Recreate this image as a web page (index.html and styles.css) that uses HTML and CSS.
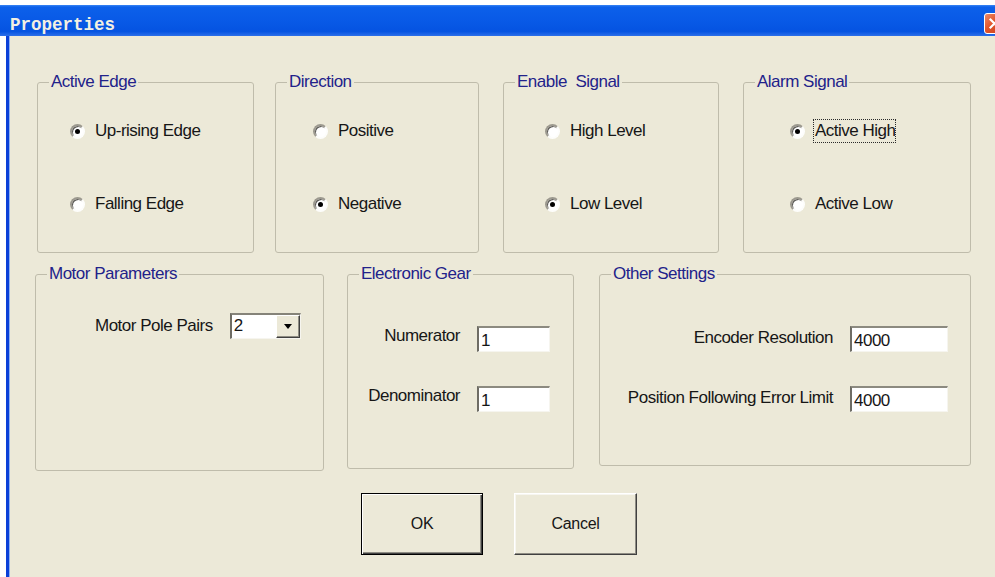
FILE: index.html
```html
<!DOCTYPE html>
<html lang="en">
<head>
<meta charset="utf-8">
<title>Properties</title>
<link rel="stylesheet" href="styles.css">
</head>
<body>
<div class="window">
  <div class="titlebar">
    <span class="title">Properties</span>
    <span class="close" aria-label="Close">
      <svg width="13" height="13" viewBox="0 0 13 13"><path d="M2.5 2.5 L10.5 10.5 M10.5 2.5 L2.5 10.5" stroke="#fff" stroke-width="2.2" stroke-linecap="square"/></svg>
    </span>
  </div>

  <div class="client">
    <div class="row row-top">
      <fieldset class="group g-edge">
        <legend>Active Edge</legend>
        <div class="options">
          <div class="option"><span class="radio checked"></span><span class="text">Up-rising Edge</span></div>
          <div class="option"><span class="radio"></span><span class="text">Falling Edge</span></div>
        </div>
      </fieldset>

      <fieldset class="group g-dir">
        <legend>Direction</legend>
        <div class="options">
          <div class="option"><span class="radio"></span><span class="text">Positive</span></div>
          <div class="option"><span class="radio checked"></span><span class="text">Negative</span></div>
        </div>
      </fieldset>

      <fieldset class="group g-enable">
        <legend>Enable&nbsp; Signal</legend>
        <div class="options">
          <div class="option"><span class="radio"></span><span class="text">High Level</span></div>
          <div class="option"><span class="radio checked"></span><span class="text">Low Level</span></div>
        </div>
      </fieldset>

      <fieldset class="group g-alarm">
        <legend>Alarm Signal</legend>
        <div class="options">
          <div class="option"><span class="radio checked"></span><span class="text focus">Active High</span></div>
          <div class="option"><span class="radio"></span><span class="text">Active Low</span></div>
        </div>
      </fieldset>
    </div>

    <div class="row row-bottom">
      <fieldset class="group g-motor">
        <legend>Motor Parameters</legend>
        <div class="motor-row">
          <span class="label">Motor Pole Pairs</span>
          <div class="combo">
            <span class="combo-value">2</span>
            <span class="combo-btn"><span class="caret"></span></span>
          </div>
        </div>
      </fieldset>

      <fieldset class="group g-gear">
        <legend>Electronic Gear</legend>
        <div class="form gear-form">
          <span class="label">Numerator</span>
          <input class="edit" type="text" value="1">
          <span class="label">Denominator</span>
          <input class="edit" type="text" value="1">
        </div>
      </fieldset>

      <fieldset class="group g-other">
        <legend>Other Settings</legend>
        <div class="form other-form">
          <span class="label">Encoder Resolution</span>
          <input class="edit" type="text" value="4000">
          <span class="label">Position Following Error Limit</span>
          <input class="edit" type="text" value="4000">
        </div>
      </fieldset>
    </div>

    <div class="buttons">
      <button class="btn btn-default" type="button">OK</button>
      <button class="btn" type="button">Cancel</button>
    </div>
  </div>
</div>
</body>
</html>
```

FILE: styles.css
```css
* {
  box-sizing: border-box;
}

html,
body {
  margin: 0;
  height: 100%;
  overflow: hidden;
  background: #ffffff;
}

body {
  font-family: "Liberation Sans", Arial, sans-serif;
  font-size: 17px;
  letter-spacing: -0.5px;
  color: #161616;
}

/* ---- window frame ---- */
.window {
  margin-top: 5px;
  height: 572px;
  display: flex;
  flex-direction: column;
}

.titlebar {
  flex: none;
  height: 31px;
  display: flex;
  justify-content: space-between;
  align-items: center;
  padding-top: 8px;
  background: linear-gradient(to bottom,
      #3a86f4 0,
      #0c60ea 2px,
      #0859e6 55%,
      #0553e1 85%,
      #2c6fe9 100%);
}

.title {
  font-family: "Liberation Mono", "Courier New", monospace;
  font-weight: bold;
  font-size: 17.5px;
  letter-spacing: 0;
  color: #f3f0e2;
  padding-left: 10px;
}

.close {
  align-self: flex-start;
  margin-top: 0;
  margin-right: -10px;
  width: 21px;
  height: 21px;
  border: 1px solid #ffffff;
  border-radius: 3px;
  background: linear-gradient(135deg, #ec8a68 0, #e0542b 45%, #c8401a 100%);
  display: flex;
  align-items: center;
  justify-content: center;
}

.client {
  flex: 1;
  margin-left: 6px;
  border-left: 3px solid #0a40d8;
  box-shadow: inset 1px 0 0 #8fb1f0;
  background: #ece9d8;
  padding: 37px 0 0 28px;
}

/* ---- group boxes ---- */
.row {
  display: flex;
  align-items: flex-start;
}

.row-bottom {
  margin-top: 12px;
}

.group {
  margin: 0;
  padding: 0;
  min-width: 0;
  border: 1px solid #bfbcab;
  border-radius: 3px;
}

.group legend {
  color: #22228a;
  line-height: 18px;
  padding: 0 2px;
  margin-left: 11px;
}

.g-edge   { width: 217px; height: 180px; }
.g-dir    { width: 204px; height: 180px; margin-left: 21px; }
.g-enable { width: 216px; height: 180px; margin-left: 24px; }
.g-alarm  { width: 228px; height: 180px; margin-left: 24px; }

.g-motor  { width: 289px; height: 206px; margin-left: -2px; }
.g-gear   { width: 227px; height: 204px; margin-left: 23px; }
.g-other  { width: 372px; height: 201px; margin-left: 25px; }

/* ---- radio buttons ---- */
.options {
  display: flex;
  flex-direction: column;
  gap: 49px;
  padding-top: 28px;
}

.g-edge .options   { padding-left: 32px; }
.g-dir .options    { padding-left: 37px; }
.g-enable .options { padding-left: 41px; }
.g-alarm .options  { padding-left: 46px; }

.option {
  display: flex;
  align-items: center;
  height: 24px;
}

.radio {
  position: relative;
  flex: none;
  width: 15px;
  height: 15px;
  margin-right: 10px;
  border-radius: 50%;
  border: 2px solid;
  border-color: #9c998f #fdfdfb #fdfdfb #9c998f;
  background: radial-gradient(circle at 60% 60%, #ffffff 0, #ffffff 60%, #f0eee6 100%);
  box-shadow: inset 1px 1px 0 #5a5955;
}

.radio.checked::after {
  content: "";
  position: absolute;
  inset: 0;
  margin: auto;
  width: 5px;
  height: 5px;
  border-radius: 50%;
  background: #000000;
}

.focus {
  margin-left: -2px;
  width: 83px;
  height: 24px;
  line-height: 22px;
  padding: 0 1px;
  border: 1px dotted #2a2a2a;
  white-space: nowrap;
  overflow: hidden;
}

/* ---- motor parameters ---- */
.motor-row {
  display: flex;
  align-items: center;
  gap: 17px;
  padding: 30px 0 0 59px;
}

.combo {
  width: 71px;
  height: 26px;
  display: flex;
  background: #ffffff;
  border-style: solid;
  border-width: 2px 1px 1px 2px;
  border-color: #858379 #f6f5ef #f6f5ef #6e6c64;
}

.combo-value {
  flex: 1;
  padding-left: 2px;
  line-height: 22px;
}

.combo-btn {
  width: 24px;
  display: flex;
  align-items: center;
  justify-content: center;
  background: #ece9d8;
  border: 1px solid;
  border-color: #ffffff #404040 #404040 #ffffff;
  box-shadow: inset -1px -1px 0 #8f8d84;
}

.caret {
  width: 0;
  height: 0;
  border-left: 4.5px solid transparent;
  border-right: 4.5px solid transparent;
  border-top: 5px solid #000000;
}

/* ---- edit fields ---- */
.form {
  display: grid;
  align-items: start;
  column-gap: 17px;
  row-gap: 34px;
  padding-top: 43px;
}

.gear-form {
  grid-template-columns: 112px 73px;
}

.other-form {
  grid-template-columns: 233px 98px;
}

.form .label {
  text-align: right;
  white-space: nowrap;
  line-height: 20px;
}

.other-form .label {
  line-height: 24px;
}

.edit {
  width: 100%;
  height: 26px;
  margin: 0;
  padding: 3px 2px 0 2px;
  font: inherit;
  letter-spacing: inherit;
  color: #161616;
  background: #ffffff;
  border-style: solid;
  border-width: 2px 1px 1px 2px;
  border-color: #8c8a80 #f6f5ef #f6f5ef #6e6c64;
  outline: none;
}

/* ---- dialog buttons ---- */
.buttons {
  display: flex;
  gap: 31px;
  margin-top: 22px;
  padding-left: 324px;
}

.btn {
  width: 123px;
  height: 62px;
  margin: 0;
  padding: 0;
  font: inherit;
  font-size: 16px;
  letter-spacing: -0.3px;
  color: #161616;
  background: #ece9d8;
  border: 1px solid;
  border-color: #ffffff #404040 #404040 #ffffff;
  box-shadow: inset -1px -1px 0 #8f8d84, inset 1px 1px 0 #f7f6f0;
}

.btn-default {
  width: 122px;
  border: 1px solid #000000;
  box-shadow: inset 1px 1px 0 #ffffff, inset -1px -1px 0 #404040, inset -2px -2px 0 #8f8d84;
}
```
